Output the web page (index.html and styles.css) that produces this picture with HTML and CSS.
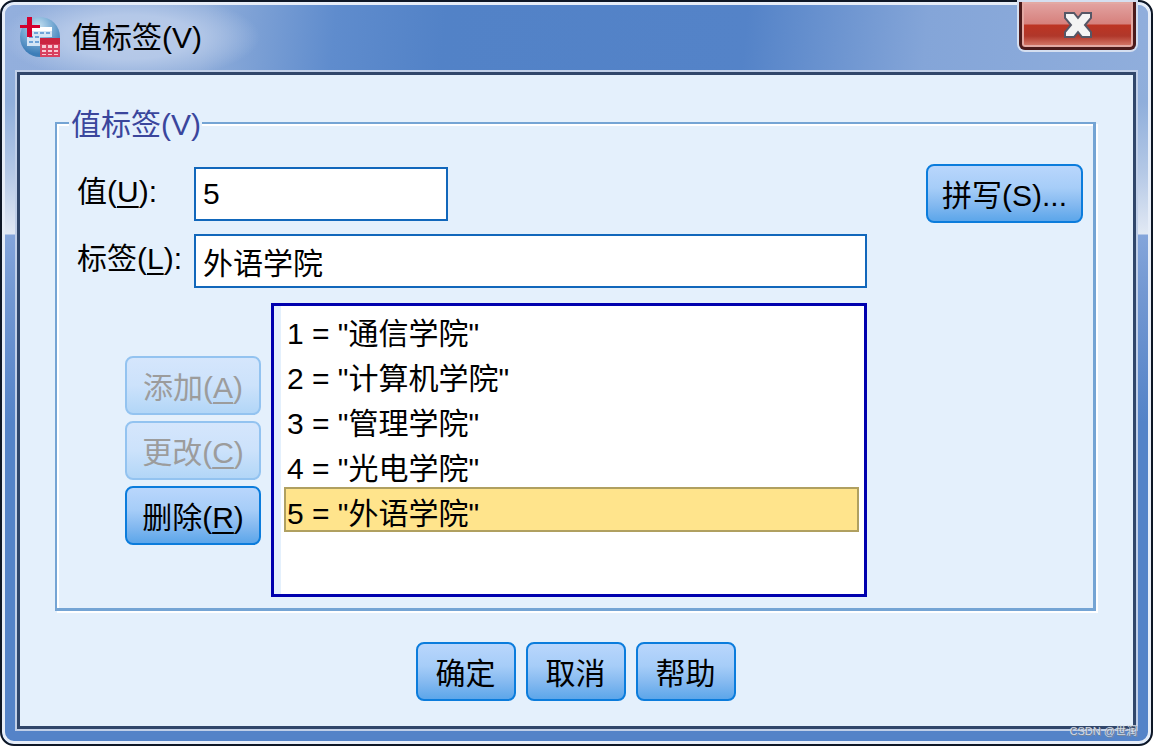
FILE: index.html
```html
<!DOCTYPE html>
<html lang="zh-CN">
<head>
<meta charset="utf-8">
<title>值标签(V)</title>
<link rel="stylesheet" href="styles.css">
</head>
<body>
<div class="window">
  <header class="titlebar">
    <svg class="app-icon" viewBox="0 0 40 40" aria-hidden="true">
      <defs>
        <radialGradient id="globe" cx="45%" cy="25%" r="75%">
          <stop offset="0" stop-color="#c9e3f2"/>
          <stop offset=".4" stop-color="#85b5da"/>
          <stop offset=".9" stop-color="#3d7db8"/>
        </radialGradient>
      </defs>
      <circle cx="20" cy="20" r="20" fill="url(#globe)"/>
      <path fill="#fff" d="M12 10h20v4H12z"/>
      <path fill="#d5e5f5" d="M7 14h25v6H7zM7 20h13v9H7z"/>
      <path fill="#6fa3d8" d="M14 15h4v2h-4zM20 15h4v2h-4zM26 15h4v2h-4zM9 19h4v2H9zM15 19h4v2h-4zM9 24h4v2H9zM15 24h4v2h-4z"/>
      <path fill="#d3002e" d="M7 0h5v8h8v3h-8v9H7v-9H0V8h7z"/>
      <path fill="#d8405f" d="M20 21h20v19H20z"/>
      <path fill="#cb2340" d="M20 21h20v6H20z"/>
      <path fill="#f7c9d3" d="M22 28h4v3h-4zM28 28h4v3h-4zM34 28h4v3h-4zM22 33h4v2h-4zM28 33h4v2h-4zM34 33h4v2h-4zM22 37h4v1h-4zM28 37h4v1h-4zM34 37h4v1h-4z"/>
    </svg>
    <h1 class="title">值标签(V)</h1>
    <button class="close" type="button" aria-label="关闭">
      <svg class="close-icon" viewBox="0 0 28 26" aria-hidden="true">
        <path d="M1 1h9l4 5 4-5h9v5l-6 7 6 7v5h-9l-4-5-4 5H1v-5l6-7-6-7z" fill="#f4f4f4" stroke="#555766" stroke-width="2"/>
      </svg>
    </button>
  </header>
  <form class="client">
    <fieldset class="group">
      <legend class="legend">值标签(V)</legend>
      <div class="main">
        <div class="row">
          <label class="label" for="value">值(<u>U</u>):</label>
          <input class="field field-short" id="value" type="text" value="5">
        </div>
        <div class="row">
          <label class="label" for="label">标签(<u>L</u>):</label>
          <input class="field" id="label" type="text" value="外语学院">
        </div>
        <div class="list-row">
          <div class="actions">
            <button class="btn" type="button" disabled>添加(<u>A</u>)</button>
            <button class="btn" type="button" disabled>更改(<u>C</u>)</button>
            <button class="btn" type="button">删除(<u>R</u>)</button>
          </div>
          <select class="list" size="6" aria-label="值标签">
            <option>1 = "通信学院"</option>
            <option>2 = "计算机学院"</option>
            <option>3 = "管理学院"</option>
            <option>4 = "光电学院"</option>
            <option selected>5 = "外语学院"</option>
          </select>
        </div>
      </div>
      <button class="btn spell" type="button">拼写(S)...</button>
    </fieldset>
    <div class="footer">
      <button class="btn" type="submit">确定</button>
      <button class="btn" type="button">取消</button>
      <button class="btn" type="button">帮助</button>
    </div>
  </form>
  <span class="watermark">CSDN @世润</span>
</div>
</body>
</html>
```
FILE: styles.css
```css
* {
  box-sizing: border-box;
}

body {
  margin: 0;
  background: #fff;
  color: #000;
  font: 30px/36px "Liberation Sans", "Noto Sans CJK SC", sans-serif;
}

button,
input,
select {
  font: inherit;
  color: inherit;
}

u {
  text-decoration-thickness: 2px;
  text-underline-offset: 4px;
}

.window {
  position: relative;
  display: flex;
  flex-direction: column;
  min-height: 100vh;
  padding: 3px 15px;
  border: 2px solid #0e1726;
  border-radius: 14px;
  box-shadow: inset 0 0 0 3px #e6edf8;
  background: linear-gradient(#93afdd 0, #8faedb 100px, #b4c8e6 170px, #e2e9f4 232px, #84a5db 233px, #7398d2 290px, #5483c8 420px, #5483c8 100%);
}

.titlebar {
  display: flex;
  align-items: flex-start;
  height: 65px;
  margin: 0 -12px;
  padding-left: 15px;
  border-radius: 10px 10px 0 0;
  background:
    radial-gradient(ellipse 130px 44px at 125px 32px, #b9cbe8 0, #b4c8e8 50%, transparent 100%),
    linear-gradient(95deg, #93afdd 0, #8fadda 200px, #5f8ccd 330px, #5282c7 440px, #5483c8 740px, #84a5d8 920px, #90aedc 100%);
}

.app-icon {
  width: 40px;
  height: 40px;
  margin-top: 12px;
}

.title {
  flex: 1;
  margin: 15px 0 0 12px;
  font-size: 30px;
  line-height: 36px;
  font-weight: 400;
}

.close {
  display: flex;
  align-items: center;
  justify-content: center;
  width: 117px;
  height: 48px;
  margin: -3px 12px 0 0;
  padding: 0;
  border: 3px solid #4b1a1a;
  border-top: 0;
  border-radius: 0 0 6px 6px;
  background: linear-gradient(#e3a5a3 0, #d6807c 22px, #bd3423 23px, #b0372a 34px, #d98070 100%);
  box-shadow: inset 0 0 0 2px #e3a9a3, 0 0 0 2px #d5dff0;
}

.close-icon {
  width: 28px;
  height: 26px;
}

.client {
  flex: 1;
  display: flex;
  flex-direction: column;
  margin: 2px 0 12px;
  padding: 28px 37px 25px 35px;
  border: 3px solid #30466a;
  box-shadow: 0 0 0 2px #c0cfe8;
  background: #e4f0fc;
}

.group {
  display: flex;
  align-items: flex-start;
  gap: 59px;
  min-width: 0;
  margin: 0;
  padding: 21px 10px 11px 20px;
  border: solid #74a4d4;
  border-width: 2px 3px 3px 2px;
  box-shadow: 2px 2px 0 #fff, inset 2px 2px 0 #fff;
}

.legend {
  margin-left: -8px;
  padding: 4px 1px 0 2px;
  background: #e4f0fc;
  color: #3a469c;
}

.main {
  flex: 1;
  display: flex;
  flex-direction: column;
  gap: 13px;
  min-width: 0;
  padding-top: 3px;
}

.row {
  display: flex;
}

.label {
  flex: none;
  width: 117px;
  padding-top: 7px;
}

.field {
  flex: 1;
  min-width: 0;
  height: 54px;
  padding: 0 7px;
  border: 2px solid #1167bb;
  border-radius: 0;
  background: #fff;
}

.field-short {
  flex: 0 1 254px;
}

.list-row {
  display: flex;
  gap: 10px;
  margin-top: 2px;
  padding-left: 48px;
}

.actions {
  display: flex;
  flex-direction: column;
  gap: 6px;
  width: 136px;
  padding-top: 53px;
}

.list {
  flex: 1;
  min-width: 0;
  height: 294px;
  padding: 1px 5px 4px 10px;
  border: 3px solid #0000ae;
  border-radius: 0;
  outline: 0;
  background: linear-gradient(90deg, #e4f0fc 7px, #fff 7px);
  overflow: hidden;
}

.list option {
  height: 45px;
  min-height: 45px;
  padding: 0 1px;
  border: 2px solid transparent;
  color: #000;
}

.list option:checked {
  border-color: #b0a060;
  background: linear-gradient(#ffe48c, #ffe48c);
}

.btn {
  height: 59px;
  padding: 4px 0 0;
  border: 2px solid #0b7cdc;
  border-radius: 8px;
  background: linear-gradient(#b9d6fc, #a6cdf8 40%, #84b9f0 70%, #5ca6ea);
}

.btn:disabled {
  border-color: #93c3f0;
  background: linear-gradient(#d5e6fc, #cce2fb 50%, #b2d6f7);
  color: #9c9c9c;
}

.spell {
  flex: none;
  width: 157px;
}

.footer {
  display: flex;
  justify-content: center;
  gap: 10px;
  margin-top: 31px;
}

.footer .btn {
  width: 100px;
}

.watermark {
  position: absolute;
  right: 14px;
  bottom: 5px;
  font-size: 11px;
  line-height: 16px;
  color: #d4dae4;
  text-shadow: 1px 1px 0 #7d8794;
}
```
